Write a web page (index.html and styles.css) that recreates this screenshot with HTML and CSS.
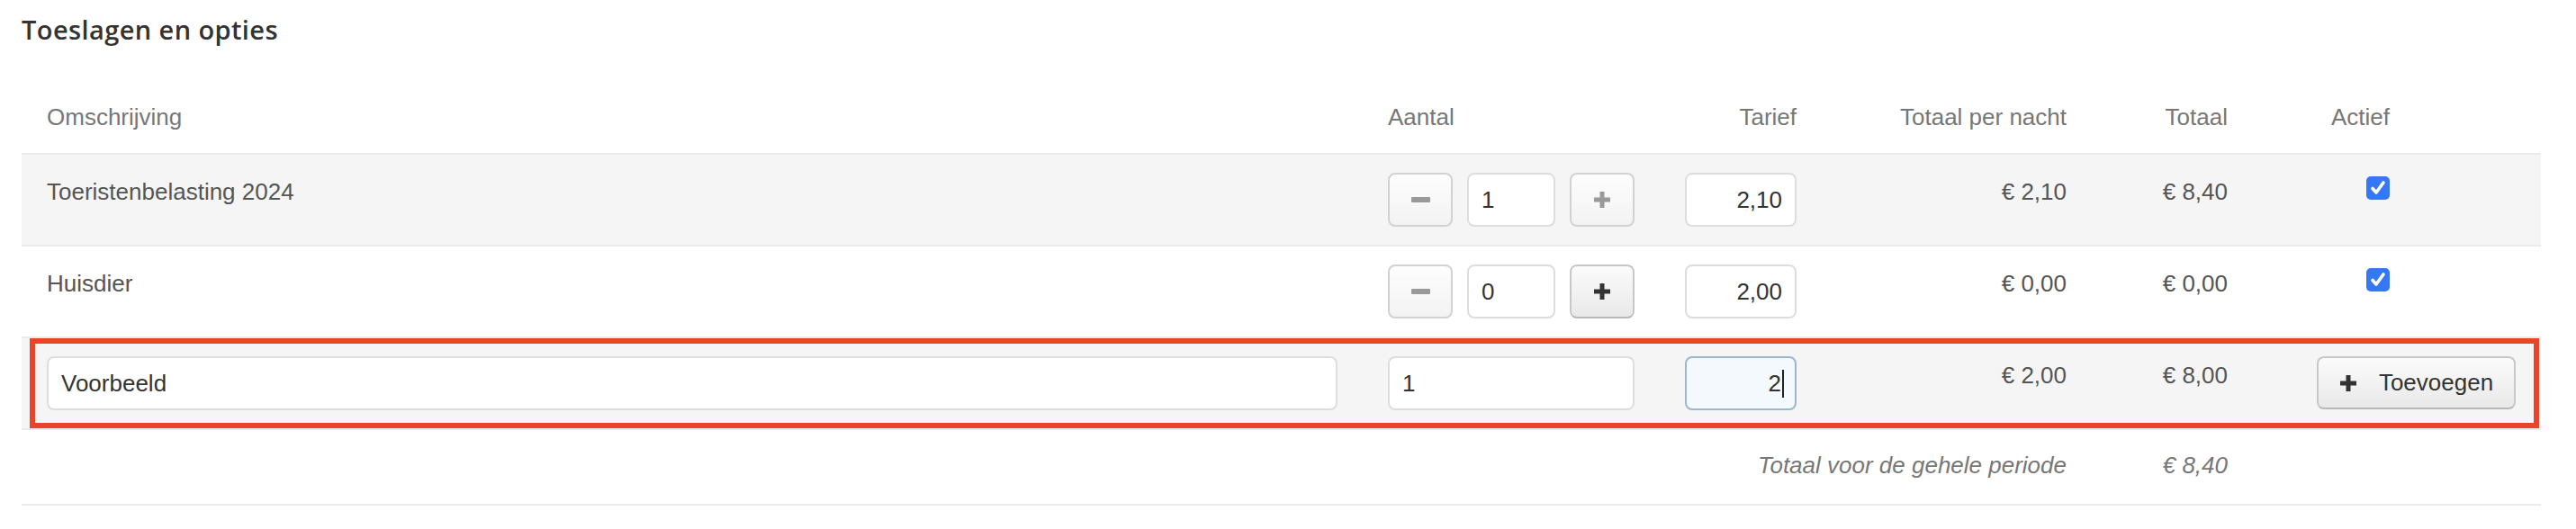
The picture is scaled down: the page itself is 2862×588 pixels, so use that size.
FILE: index.html
```html
<!DOCTYPE html>
<html lang="nl">
<head>
    <meta charset="UTF-8">
    <title>Toeslagen en opties</title>
    <link rel="stylesheet" href="styles.css">
</head>
<body>
    <main class="page">
        <h2 class="title">Toeslagen en opties</h2>

        <div class="options">
            <div class="row head">
                <div class="cell">Omschrijving</div>
                <div class="cell">Aantal</div>
                <div class="cell right">Tarief</div>
                <div class="cell right">Totaal per nacht</div>
                <div class="cell right">Totaal</div>
                <div class="cell right actief">Actief</div>
            </div>

            <div class="row striped">
                <div class="cell text">Toeristenbelasting 2024</div>
                <div class="cell">
                    <div class="stepper">
                        <button class="btn btn-square btn-disabled"><span class="icon-minus"></span></button>
                        <input class="field" type="text" value="1">
                        <button class="btn btn-square btn-disabled">
                            <svg class="icon-plus" viewBox="0 0 20 20"><path d="M7.5 1h5v6.5H19v5h-6.5V19h-5v-6.5H1v-5h6.5z"/></svg>
                        </button>
                    </div>
                </div>
                <div class="cell"><input class="field field-right" type="text" value="2,10"></div>
                <div class="cell text right">€ 2,10</div>
                <div class="cell text right">€ 8,40</div>
                <div class="cell right actief check-cell"><span class="check"><svg viewBox="0 0 26 26"><path d="M7 13.5l4 4.5 8-11"/></svg></span></div>
            </div>

            <div class="row">
                <div class="cell text">Huisdier</div>
                <div class="cell">
                    <div class="stepper">
                        <button class="btn btn-square btn-disabled"><span class="icon-minus"></span></button>
                        <input class="field" type="text" value="0">
                        <button class="btn btn-square">
                            <svg class="icon-plus" viewBox="0 0 20 20"><path d="M7.5 1h5v6.5H19v5h-6.5V19h-5v-6.5H1v-5h6.5z"/></svg>
                        </button>
                    </div>
                </div>
                <div class="cell"><input class="field field-right" type="text" value="2,00"></div>
                <div class="cell text right">€ 0,00</div>
                <div class="cell text right">€ 0,00</div>
                <div class="cell right actief check-cell"><span class="check"><svg viewBox="0 0 26 26"><path d="M7 13.5l4 4.5 8-11"/></svg></span></div>
            </div>

            <div class="row striped new-row">
                <div class="cell"><input class="field field-wide" type="text" value="Voorbeeld"></div>
                <div class="cell"><input class="field field-wide" type="text" value="1"></div>
                <div class="cell"><div class="field field-right field-focus">2<span class="caret"></span></div></div>
                <div class="cell text right">€ 2,00</div>
                <div class="cell text right">€ 8,00</div>
                <div class="cell add-cell">
                    <button class="btn btn-add">
                        <svg class="icon-plus" viewBox="0 0 20 20"><path d="M7.5 1h5v6.5H19v5h-6.5V19h-5v-6.5H1v-5h6.5z"/></svg>
                        Toevoegen
                    </button>
                </div>
            </div>

            <div class="row foot">
                <div class="cell right">Totaal voor de gehele periode</div>
                <div class="cell right">€ 8,40</div>
                <div class="cell"></div>
            </div>
        </div>
    </main>
</body>
</html>
```

FILE: styles.css
```css
body {
    margin: 0;
    background-color: white;
    font-family: "Liberation Sans", Arial, sans-serif;
    font-size: 26px;
    color: #555;
}

.page {
    padding: 16px 39px 0 24px;
}

.title {
    margin: 0 0 40px 0;
    font-family: "Open Sans", Lato, sans-serif;
    font-weight: 600;
    font-size: 29px;
    letter-spacing: 0.4px;
    line-height: 34px;
    color: #333;
}

.options {
    border-bottom: 2px solid #ebebeb;
}

.row {
    display: grid;
    grid-template-columns: 1490px 330px 180px 300px 179px 1fr;
    border-top: 2px solid #ebebeb;
    padding: 20px 0;
    line-height: 37px;
}

.row.head {
    border-top: none;
    padding: 22px 0 21px 0;
    color: #777;
}

.striped {
    background-color: #f5f5f5;
}

.cell {
    padding: 0 28px;
}

.text {
    padding-top: 3px;
}

.right {
    text-align: right;
}

.actief {
    padding-right: 168px;
}

.check-cell {
    padding-top: 4px;
    line-height: 0;
}

.check {
    display: inline-block;
    width: 26px;
    height: 26px;
    border-radius: 5px;
    background-color: #3478f6;
}

.check svg {
    width: 26px;
    height: 26px;
    fill: none;
    stroke: white;
    stroke-width: 3.6;
    stroke-linecap: round;
    stroke-linejoin: round;
}

.stepper {
    display: flex;
    gap: 16px;
}

.field {
    box-sizing: border-box;
    width: 98px;
    height: 60px;
    margin: 0;
    padding: 0 14px;
    border: 2px solid #ddd;
    border-radius: 8px;
    background-color: white;
    font-family: "Liberation Sans", Arial, sans-serif;
    font-size: 26px;
    color: #333;
    outline: none;
}

.field-right {
    width: 124px;
    text-align: right;
}

.field-wide {
    width: 100%;
}

.field-focus {
    display: flex;
    align-items: center;
    justify-content: flex-end;
    padding-right: 12px;
    border-color: #9db6ca;
    background-color: #f4f9fd;
}

.caret {
    width: 2px;
    height: 31px;
    margin-left: 1px;
    background-color: #222;
}

.btn {
    display: flex;
    align-items: center;
    justify-content: center;
    box-sizing: border-box;
    height: 60px;
    margin: 0;
    padding: 0;
    border: 2px solid #c8c8c8;
    border-bottom-color: #b8b8b8;
    border-radius: 8px;
    background: linear-gradient(#fbfbfb, #e9e9e9);
    font-family: "Liberation Sans", Arial, sans-serif;
    font-size: 26px;
    color: #333;
}

.btn-square {
    width: 72px;
    flex: none;
}

.btn-disabled {
    border-color: #d2d2d2;
    background: linear-gradient(#fdfdfd, #f3f3f3);
}

.icon-minus {
    display: block;
    width: 21px;
    height: 6px;
    border-radius: 1px;
    background-color: #999;
}

.icon-plus {
    width: 20px;
    height: 20px;
    fill: #333;
}

.btn-disabled .icon-plus {
    fill: #999;
}

.add-cell {
    display: flex;
    justify-content: flex-end;
}

.btn-add {
    width: 221px;
    height: 59px;
    gap: 24px;
}

.new-row {
    position: relative;
}

.new-row::after {
    content: "";
    position: absolute;
    top: 0;
    right: 2px;
    bottom: 0;
    left: 9px;
    border: 6px solid #e9452a;
    pointer-events: none;
}

.row.foot {
    padding: 21px 0 24px 0;
    grid-template-columns: 2300px 179px 1fr;
    font-style: italic;
    color: #777;
}
```
